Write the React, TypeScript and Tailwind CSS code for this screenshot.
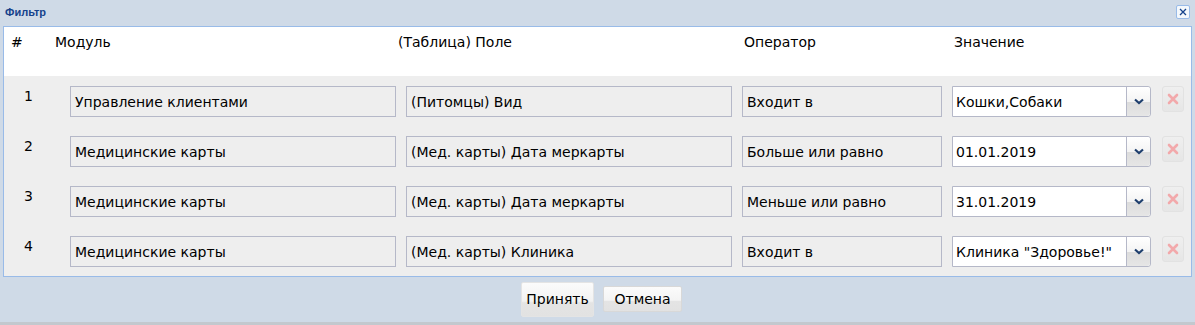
const ROWS = [
  { n: 1, module: "Управление клиентами", field: "(Питомцы) Вид", op: "Входит в", value: "Кошки,Собаки" },
  { n: 2, module: "Медицинские карты", field: "(Мед. карты) Дата меркарты", op: "Больше или равно", value: "01.01.2019" },
  { n: 3, module: "Медицинские карты", field: "(Мед. карты) Дата меркарты", op: "Меньше или равно", value: "31.01.2019" },
  { n: 4, module: "Медицинские карты", field: "(Мед. карты) Клиника", op: "Входит в", value: 'Клиника "Здоровье!"' },
];

function Field({ text, width }: { text: string; width: string }) {
  return (
    <div className={`${width} flex h-[31px] shrink-0 items-center border border-[#b5b8c8] bg-[#eeeeee] pl-[4px] pt-[2px] text-[14px] text-black`}>
      {text}
    </div>
  );
}

function Combo({ text }: { text: string }) {
  return (
    <div className="flex h-[31px] w-[199px] shrink-0 rounded-r-[3px] border border-[#b5b8c8] bg-white">
      <div className="flex min-w-0 flex-1 items-center overflow-hidden whitespace-nowrap pl-[3px] pt-[2px] text-[14px] text-black">{text}</div>
      <div className="flex w-[24px] shrink-0 items-center justify-center rounded-r-[3px] border-l border-[#b5b8c8] bg-[linear-gradient(#ffffff_0%,#f4f4f4_50%,#dcdcdc_51%,#e6e6e6_100%)]">
        <svg viewBox="0 0 10 7" className="h-[7px] w-[10px]">
          <path d="M1 1.5 L5 5 L9 1.5" fill="none" stroke="#1f3f6e" strokeWidth="2.2" />
        </svg>
      </div>
    </div>
  );
}

function DeleteButton() {
  return (
    <div className="ml-[11px] flex h-[26px] w-[22px] shrink-0 items-center justify-center rounded-[3px] border border-[#e2e2e2] bg-[linear-gradient(#efefef,#e6e6e6)]">
      <svg viewBox="0 0 12 12" className="h-[12px] w-[12px]">
        <path d="M2 2 L10 10 M10 2 L2 10" stroke="#f2a9ab" strokeWidth="2.6" strokeLinecap="round" />
      </svg>
    </div>
  );
}

export default function App() {
  return (
    <div className="flex h-[325px] w-[1195px] flex-col bg-[#cfdae7] font-['DejaVu_Sans',sans-serif]">
      <div className="flex h-[26px] items-start justify-between pl-[5px] pr-[5px]">
        <span className="mt-[6px] font-['Liberation_Sans',sans-serif] text-[11px] font-bold leading-[13px] text-[#15428b]">Фильтр</span>
        <div className="mt-[5px] flex h-[14px] w-[14px] items-center justify-center rounded-[2px] border border-[#99bbe8] bg-[#f4f8fc]">
          <svg viewBox="0 0 8 8" className="h-[8px] w-[8px]">
            <path d="M1 1 L7 7 M7 1 L1 7" stroke="#15428b" strokeWidth="1.3" />
          </svg>
        </div>
      </div>

      <div className="mx-[3px] flex flex-col border border-[#99bbe8]">
        <div className="flex h-[49px] bg-white pt-[5px] text-[14px] leading-[20px] text-black">
          <span className="w-[51px] pl-[7px]">#</span>
          <span className="w-[343px]">Модуль</span>
          <span className="w-[346px]">(Таблица) Поле</span>
          <span className="w-[210px]">Оператор</span>
          <span>Значение</span>
        </div>
        <div className="flex flex-col gap-[19px] bg-[#eeeeee] pb-[9px] pt-[10px]">
          {ROWS.map((r) => (
            <div key={r.n} className="flex items-start">
              <div className="w-[66px] pl-[20px] text-[14px] leading-[20px] text-black">{r.n}</div>
              <Field text={r.module} width="w-[326px]" />
              <div className="w-[10px]" />
              <Field text={r.field} width="w-[326px]" />
              <div className="w-[10px]" />
              <Field text={r.op} width="w-[200px]" />
              <div className="w-[10px]" />
              <Combo text={r.value} />
              <DeleteButton />
            </div>
          ))}
        </div>
      </div>

      <div className="ml-[8px] flex flex-1 items-start justify-center gap-[9px] pt-[5px] text-[14px] text-black">
        <button className="h-[35px] w-[73px] rounded-[2px] border border-[#e4e4e4] bg-[linear-gradient(#fbfbfb_0%,#f2f2f2_55%,#e4e4e4_60%,#e2e2e2_100%)]">
          Принять
        </button>
        <button className="mt-[4px] h-[26px] w-[79px] rounded-[2px] border border-[#d8d8d8] bg-[linear-gradient(#fbfbfb_0%,#f4f4f4_55%,#e4e4e4_60%,#e2e2e2_100%)]">
          Отмена
        </button>
      </div>
      <div className="h-[3px] bg-[#c3c8ce]" />
    </div>
  );
}
